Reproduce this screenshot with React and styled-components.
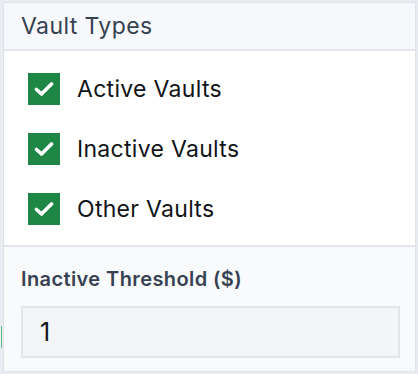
import React from "react";
import styled, { createGlobalStyle } from "styled-components";

const GlobalStyle = createGlobalStyle`
    html, body {
        margin: 0;
        padding: 0;
        background: #e9ecf0;
    }
    body {
        font-family: Inter, "Noto Sans", sans-serif;
    }
`;

const Page = styled.div`
    width: 418px;
    height: 374px;
    padding: 2px 2px 0 3px;
    box-sizing: border-box;
    position: relative;
`;

const Panel = styled.div`
    width: 413px;
    height: 370px;
    box-sizing: border-box;
    border: 1px solid #dfe3e9;
    background: #ffffff;
    display: flex;
    flex-direction: column;
`;

const Header = styled.div`
    height: 48px;
    box-sizing: border-box;
    background: #f6f8fb;
    border-bottom: 2px solid #e3e7ed;
    display: flex;
    align-items: center;
    padding-left: 17px;
    font-size: 23px;
    letter-spacing: 0.4px;
    color: #364152;
`;

const List = styled.div`
    display: flex;
    flex-direction: column;
    gap: 28px;
    padding: 22px 0 20px 24px;
    border-bottom: 2px solid #e3e7ed;
`;

const Row = styled.label`
    display: flex;
    align-items: center;
    gap: 17px;
    font-size: 23px;
    letter-spacing: 0.3px;
    color: #111418;
    cursor: pointer;
`;

const Box = styled.span`
    width: 32px;
    height: 32px;
    background: #1e8746;
    display: flex;
    align-items: center;
    justify-content: center;
    flex-shrink: 0;
`;

const Footer = styled.div`
    flex: 1;
    background: #f8fafc;
    padding: 20px 15px 0 17px;
    display: flex;
    flex-direction: column;
    gap: 15px;
`;

const Label = styled.div`
    font-size: 20px;
    font-weight: 600;
    letter-spacing: 0.4px;
    color: #364152;
`;

const Input = styled.div`
    height: 52px;
    box-sizing: border-box;
    background: #f3f5f8;
    border: 2px solid #e2e5ea;
    display: flex;
    align-items: center;
    padding-left: 17px;
    font-size: 25px;
    color: #111418;
`;

const Mark = styled.span`
    position: absolute;
    left: 1px;
    top: 326px;
    width: 1px;
    height: 22px;
    background: #5cc08a;
`;

const Check = () => (
    <svg width="20" height="20" viewBox="0 0 20 20">
        <path
            d="M2.5 10.5 L7.5 15 L17.5 5"
            fill="none"
            stroke="#fff"
            strokeWidth="3.6"
            strokeLinecap="round"
            strokeLinejoin="round"
        />
    </svg>
);

const types = ["Active Vaults", "Inactive Vaults", "Other Vaults"];

export default function App() {
    return (
        <Page>
            <GlobalStyle />
            <Mark />
            <Panel>
                <Header>Vault Types</Header>
                <List>
                    {types.map((t) => (
                        <Row key={t}>
                            <Box>
                                <Check />
                            </Box>
                            {t}
                        </Row>
                    ))}
                </List>
                <Footer>
                    <Label>Inactive Threshold ($)</Label>
                    <Input>1</Input>
                </Footer>
            </Panel>
        </Page>
    );
}
